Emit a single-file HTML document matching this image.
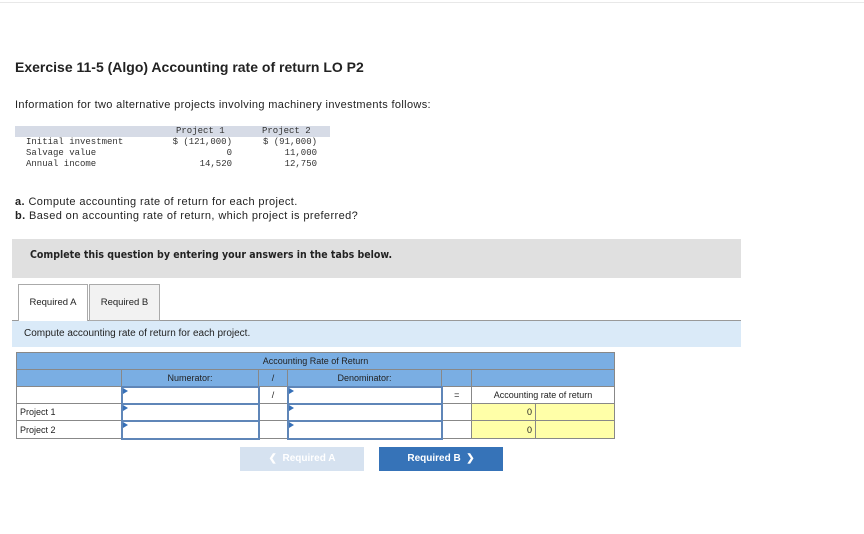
<!DOCTYPE html><html><head><style>
body{margin:0;width:864px;height:534px;background:#fff;position:relative;font-family:"Liberation Sans",sans-serif;color:#222;overflow:hidden}
.a{position:absolute;white-space:nowrap}
.m{font-family:"Liberation Mono",monospace;font-size:9px;line-height:11px;color:#333}
table{border-collapse:collapse;position:absolute;left:16px;top:352px;font-size:9px}
td{border:1px solid #888;padding:0 3px;height:15px;box-sizing:border-box}
.h td{background:#7aaee3;text-align:center;height:17px}
.in{border:2px solid #5f86b8;position:relative}
.in:before{content:"";position:absolute;left:0;top:0;border-left:5px solid #3670b8;border-top:3px solid transparent;border-bottom:3px solid transparent}
.y{background:#ffffa8;text-align:right}
</style></head><body>
<div class="a" style="left:0;top:2px;width:864px;height:1px;background:#e8e8e8"></div>
<div class="a" style="left:15px;top:59px;font-size:14px;font-weight:bold;color:#222">Exercise 11-5 (Algo) Accounting rate of return LO P2</div>
<div class="a" style="left:15px;top:99px;font-size:11px;letter-spacing:0.35px">Information for two alternative projects involving machinery investments follows:</div>
<div class="a" style="left:15px;top:126px;width:315px;height:11px;background:#d6dbe6"></div>
<div class="a m" style="left:176px;top:126px">Project 1</div>
<div class="a m" style="left:262px;top:126px">Project 2</div>
<div class="a m" style="left:26px;top:137px">Initial investment<br>Salvage value<br>Annual income</div>
<div class="a m" style="left:150px;top:137px;width:82px;text-align:right">$ (121,000)<br>0<br>14,520</div>
<div class="a m" style="left:240px;top:137px;width:77px;text-align:right">$ (91,000)<br>11,000<br>12,750</div>
<div class="a" style="left:15px;top:195px;font-size:11px;line-height:14px;letter-spacing:0.4px"><b>a.</b> Compute accounting rate of return for each project.<br><b>b.</b> Based on accounting rate of return, which project is preferred?</div>
<div class="a" style="left:12px;top:239px;width:729px;height:39px;background:#e0e0e0"></div>
<div class="a" style="left:30px;top:249px;font-size:10.5px;font-weight:bold;font-family:'DejaVu Sans Condensed','Liberation Sans',sans-serif">Complete this question by entering your answers in the tabs below.</div>
<div class="a" style="left:12px;top:320px;width:729px;height:1px;background:#999"></div>
<div class="a" style="left:18px;top:284px;width:68px;height:37px;background:#fff;border:1px solid #aaa;border-bottom:none;font-size:9.5px;line-height:36px;text-align:center">Required A</div>
<div class="a" style="left:89px;top:284px;width:69px;height:35px;background:#f2f2f2;border:1px solid #aaa;font-size:9.5px;line-height:36px;text-align:center">Required B</div>
<div class="a" style="left:12px;top:321px;width:729px;height:26px;background:#daeaf8;font-size:10px;line-height:26px;text-indent:12px">Compute accounting rate of return for each project.</div>
<table>
<tr class="h"><td colspan="7">Accounting Rate of Return</td></tr>
<tr class="h"><td style="width:105px"></td><td style="width:137px">Numerator:</td><td style="width:29px">/</td><td style="width:154px">Denominator:</td><td style="width:30px"></td><td colspan="2"></td></tr>
<tr><td style="height:17px"></td><td class="in"></td><td style="text-align:center">/</td><td class="in"></td><td style="text-align:center">=</td><td colspan="2" style="text-align:center">Accounting rate of return</td></tr>
<tr><td style="height:17px">Project 1</td><td class="in"></td><td></td><td class="in"></td><td></td><td class="y" style="width:64px">0</td><td class="y" style="width:79px;text-align:left"></td></tr>
<tr><td style="height:18px">Project 2</td><td class="in"></td><td></td><td class="in"></td><td></td><td class="y">0</td><td class="y"></td></tr>
</table>
<div class="a" style="left:240px;top:447px;width:124px;height:24px;background:#d6e2f0;color:#fff;font-size:10px;font-weight:bold;line-height:24px;text-align:center">&#10094;&nbsp; Required A</div>
<div class="a" style="left:379px;top:447px;width:124px;height:24px;background:#3673b8;color:#fff;font-size:10px;font-weight:bold;line-height:24px;text-align:center">Required B &nbsp;&#10095;</div>
</body></html>
